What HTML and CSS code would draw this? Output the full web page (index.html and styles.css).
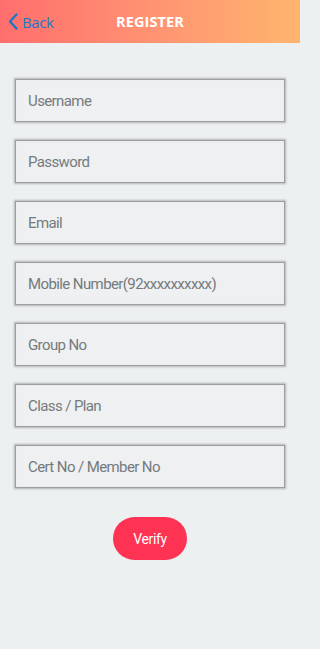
FILE: index.html
```html
<!DOCTYPE html>
<html>
<head>
<meta charset="utf-8">
<link rel="stylesheet" href="styles.css">
</head>
<body>
<header class="nav">
  <div class="back">
    <svg class="chev" width="10" height="17" viewBox="0 0 10 17"><path d="M8.5 1.5 L2 8.5 L8.5 15.5" fill="none" stroke="#1a78c9" stroke-width="2.4" stroke-linecap="round" stroke-linejoin="round"/></svg>
    <span>Back</span>
  </div>
  <div class="title">REGISTER</div>
</header>
<main class="form">
  <div class="field">Username</div>
  <div class="field">Password</div>
  <div class="field">Email</div>
  <div class="field">Mobile Number(92xxxxxxxxxx)</div>
  <div class="field">Group No</div>
  <div class="field">Class / Plan</div>
  <div class="field">Cert No / Member No</div>
  <div class="btn-row"><div class="btn">Verify</div></div>
</main>
</body>
</html>
```
FILE: styles.css
```css
html, body { margin: 0; padding: 0; }
html { background: #ecf0f1; }
body {
  width: 300px;
  height: 649px;
  background: #ecf0f1;
  font-family: Roboto, "Liberation Sans", sans-serif;
  overflow: hidden;
}
.nav {
  position: relative;
  height: 43px;
  background: linear-gradient(90deg, #ff6e6e 0%, #ff9672 55%, #ffb56e 100%);
  display: flex;
  align-items: center;
  justify-content: center;
}
.back {
  position: absolute;
  left: 8px;
  top: 0;
  height: 43px;
  display: flex;
  align-items: center;
  gap: 4px;
  color: #1a78c9;
  font-size: 15px;
  letter-spacing: -0.4px;
  font-family: "Open Sans", "Liberation Sans", sans-serif;
}
.chev { display: block; }
.title {
  color: #fff;
  font-weight: 700;
  font-size: 14.5px;
  font-family: "Open Sans", "Liberation Sans", sans-serif;
  letter-spacing: 0.1px;
}
.form {
  padding: 36px 15px 0 15px;
  display: flex;
  flex-direction: column;
  gap: 18px;
}
.field {
  height: 41px;
  border: 1px solid #9e9e9e;
  box-shadow: 0 0 2px 1px rgba(0,0,0,0.25), inset 0 0 1px rgba(0,0,0,0.1);
  background: #eef0f1;
  display: flex;
  align-items: center;
  padding-left: 12px;
  color: #757a7c;
  font-size: 15px;
  letter-spacing: -0.6px;
}
.btn-row {
  display: flex;
  justify-content: center;
  margin-top: 11px;
}
.btn {
  width: 74px;
  height: 43px;
  border-radius: 22px;
  background: #fe3252;
  color: #fff;
  font-size: 14px;
  letter-spacing: -0.4px;
  display: flex;
  align-items: center;
  justify-content: center;
}
```
